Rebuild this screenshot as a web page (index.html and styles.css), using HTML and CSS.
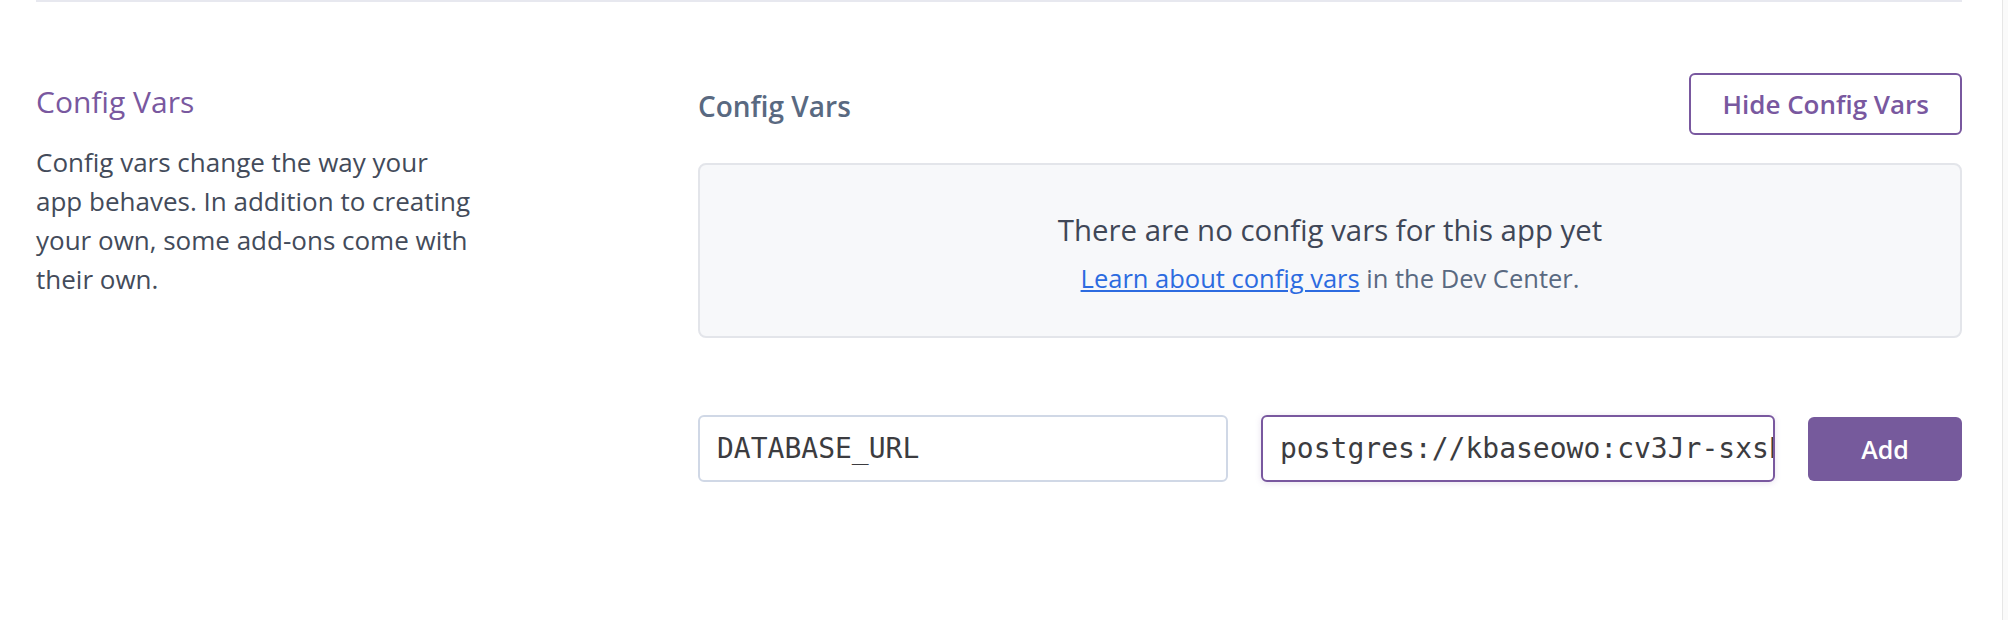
FILE: index.html
```html
<!DOCTYPE html>
<html lang="en">
<head>
<meta charset="utf-8">
<title>Config Vars</title>
<link rel="stylesheet" href="styles.css">
</head>
<body>
<div class="page">
  <main class="main">
    <section class="settings-section">
      <div class="section-info">
        <h2 class="section-title">Config Vars</h2>
        <p class="section-desc">Config vars change the way your app behaves. In addition to creating your own, some add-ons come with their own.</p>
      </div>
      <div class="section-body">
        <div class="body-header">
          <h3 class="body-title">Config Vars</h3>
          <button class="btn-outline" type="button">Hide Config Vars</button>
        </div>
        <div class="empty-box">
          <p class="empty-title">There are no config vars for this app yet</p>
          <p class="empty-sub"><a href="#">Learn about config vars</a> in the Dev Center.</p>
        </div>
        <form class="var-row">
          <input class="var-input key" type="text" value="DATABASE_URL">
          <input class="var-input value" type="text" value="postgres://kbaseowo:cv3Jr-sxsEkq9WfLz@raja.db.elephantsql.com/kbaseowo">
          <button class="btn-primary" type="button">Add</button>
        </form>
      </div>
    </section>
  </main>
  <div class="scrollbar"></div>
</div>
</body>
</html>
```

FILE: styles.css
```css
html, body {
  margin: 0;
  height: 100%;
}
body {
  font-family: "Open Sans", "Liberation Sans", sans-serif;
  background: #fff;
  overflow: hidden;
}
.page {
  display: flex;
  height: 620px;
}
.main {
  flex: 1;
  padding: 0 40px 0 36px;
}
.settings-section {
  border-top: 2px solid #e7e8ef;
  display: flex;
  padding-top: 71px;
}
.section-info {
  width: 662px;
  flex-shrink: 0;
  padding-top: 9px;
}
.section-title {
  margin: 0;
  font-size: 30px;
  font-weight: 400;
  line-height: 40px;
  color: #79589f;
}
.section-desc {
  margin: 21px 0 0;
  width: 437px;
  font-size: 26px;
  line-height: 39px;
  color: #434b5a;
}
.section-body {
  flex: 1;
}
.body-header {
  display: flex;
  justify-content: space-between;
  align-items: center;
}
.body-title {
  margin: 4px 0 0;
  font-size: 28px;
  font-weight: 600;
  color: #596981;
}
.btn-outline {
  height: 62px;
  padding: 0 31px;
  border: 2px solid #79589f;
  border-radius: 6px;
  background: #fff;
  color: #79589f;
  font: 600 26px "Open Sans", "Liberation Sans", sans-serif;
}
.empty-box {
  margin-top: 28px;
  border: 2px solid #e3e5ea;
  border-radius: 8px;
  background: #f7f8fa;
  text-align: center;
  padding: 46px 20px 38px;
}
.empty-title {
  margin: 0;
  font-size: 29.4px;
  line-height: 39px;
  color: #3f4757;
}
.empty-sub {
  margin: 8px 0 0;
  font-size: 25.5px;
  line-height: 40px;
  color: #596981;
}
.empty-sub a {
  color: #2c6be0;
  text-decoration: underline;
}
.var-row {
  display: flex;
  align-items: center;
  gap: 33px;
  margin: 77px 0 0;
}
.var-input {
  box-sizing: border-box;
  height: 67px;
  border: 2px solid #d0d8e6;
  border-radius: 6px;
  padding: 0 0 0 17px;
  font: 28px "DejaVu Sans Mono", "Liberation Mono", monospace;
  color: #3c3c40;
  background: #fff;
  outline: none;
}
.key {
  width: 530px;
}
.value {
  width: 514px;
  border-color: #79589f;
  box-shadow: 0 1px 6px rgba(121, 88, 159, 0.18);
}
.btn-primary {
  width: 154px;
  height: 64px;
  border: 0;
  border-radius: 6px;
  background: #765a9c;
  color: #fff;
  font: 600 25px "Open Sans", "Liberation Sans", sans-serif;
}
.scrollbar {
  width: 5px;
  border-left: 1px solid #e6e6e6;
  background: #fafafa;
}
```
